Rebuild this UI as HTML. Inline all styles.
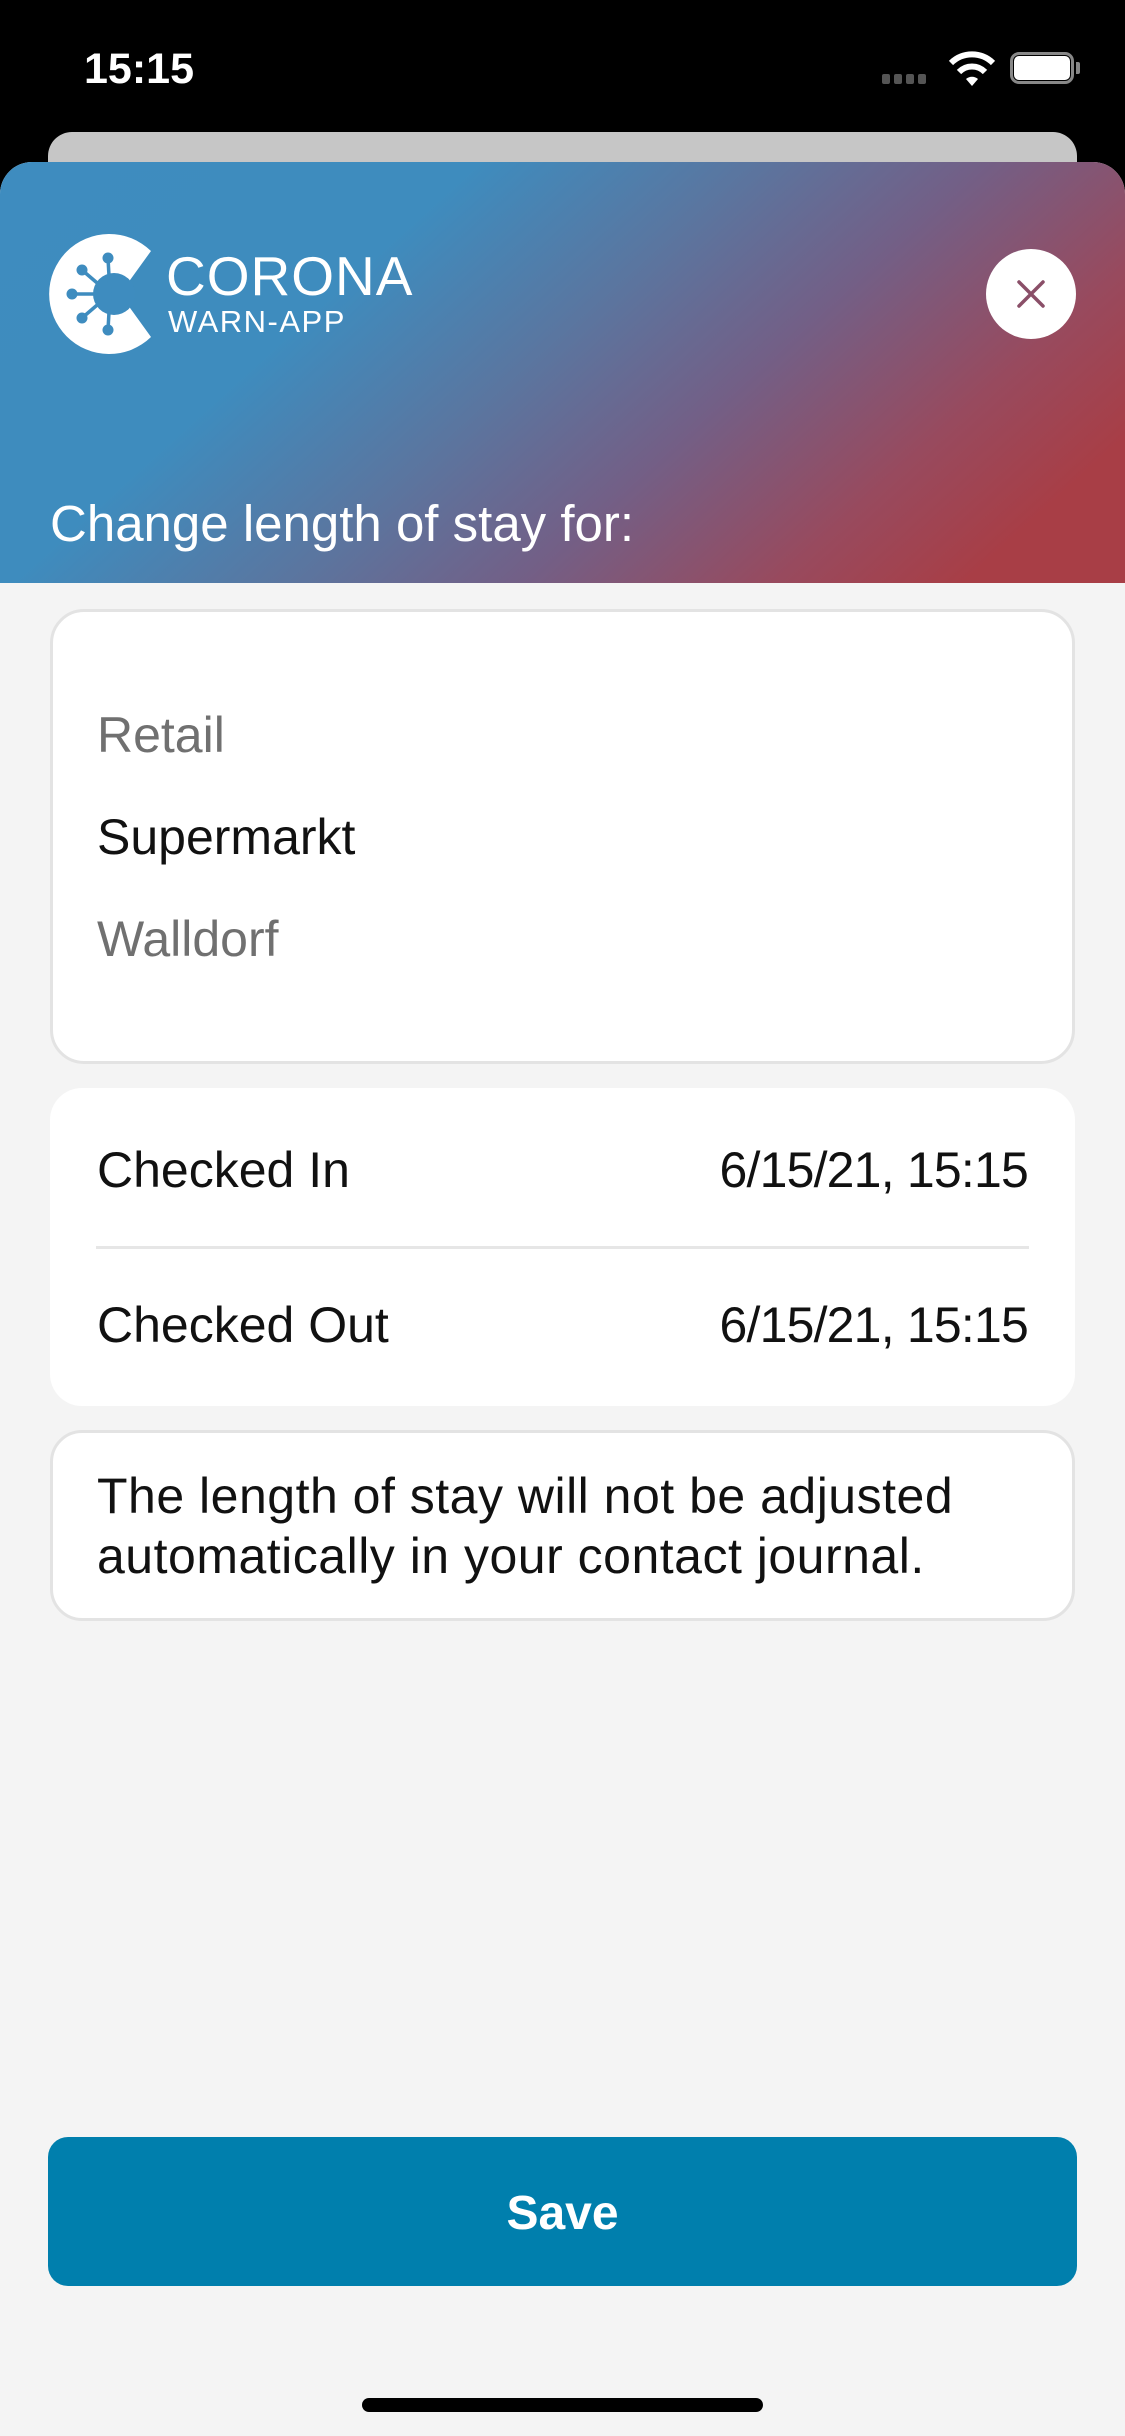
<!DOCTYPE html>
<html><head><meta charset="utf-8"><style>
*{margin:0;padding:0;box-sizing:border-box}
body{width:1125px;height:2436px;background:#000;position:relative;overflow:hidden;font-family:"Liberation Sans",sans-serif}
.abs{position:absolute}
.t{position:absolute;white-space:nowrap;font-size:50px;line-height:1}
</style></head><body>
<div class="t" style="left:84px;top:48px;color:#fff;font-weight:bold;font-size:43px">15:15</div>
<!-- signal dots -->
<div class="abs" style="left:882px;top:74px;width:8px;height:10px;background:#555;border-radius:2px"></div>
<div class="abs" style="left:894px;top:74px;width:8px;height:10px;background:#555;border-radius:2px"></div>
<div class="abs" style="left:906px;top:74px;width:8px;height:10px;background:#555;border-radius:2px"></div>
<div class="abs" style="left:918px;top:74px;width:8px;height:10px;background:#555;border-radius:2px"></div>
<svg class="abs" style="left:948px;top:50px" width="48" height="38" viewBox="0 0 48 38"><path d="M24 36 L18 29 A9 9 0 0 1 30 29 Z" fill="#fff"/><path d="M11 22 A18 18 0 0 1 37 22" stroke="#fff" stroke-width="6" fill="none"/><path d="M3 13 A30 30 0 0 1 45 13" stroke="#fff" stroke-width="6" fill="none"/></svg>
<div class="abs" style="left:1010px;top:52px;width:64px;height:32px;border:3px solid #888;border-radius:9px"></div>
<div class="abs" style="left:1014px;top:56px;width:56px;height:24px;background:#fff;border-radius:5px"></div>
<div class="abs" style="left:1076px;top:62px;width:4px;height:12px;background:#888;border-radius:0 2px 2px 0"></div>
<!-- card behind -->
<div class="abs" style="left:48px;top:132px;width:1029px;height:80px;background:#c6c6c6;border-radius:24px 24px 0 0"></div>
<!-- sheet -->
<div class="abs" style="left:0;top:162px;width:1125px;height:2274px;background:#f4f4f4;border-radius:32px 32px 0 0;overflow:hidden">
 <div class="abs" style="left:0;top:0;width:1125px;height:421px;background:linear-gradient(138deg,#3e8cbf 0%,#3e8cbe 30%,#5a76a0 47%,#735f86 62%,#984a5e 78%,#a83e46 90%)"></div>
</div>
<!-- logo -->
<svg class="abs" style="left:0;top:200px" width="200" height="180" viewBox="0 200 200 180">
 <path d="M151 251 A60 60 0 1 0 151 337 L120 294 Z" fill="#fff"/>
 <circle cx="114" cy="294" r="21" fill="#3e8cbf"/>
 <g stroke="#3e8cbf" stroke-width="3.5">
  <line x1="110" y1="294" x2="72" y2="294"/><line x1="110" y1="294" x2="108" y2="258"/><line x1="110" y1="294" x2="108" y2="330"/>
  <line x1="110" y1="294" x2="82" y2="270"/><line x1="110" y1="294" x2="82" y2="318"/>
 </g>
 <g fill="#3e8cbf"><circle cx="72" cy="294" r="5.5"/><circle cx="108" cy="258" r="5.5"/><circle cx="108" cy="330" r="5.5"/><circle cx="82" cy="270" r="5.5"/><circle cx="82" cy="318" r="5.5"/></g>
</svg>
<div class="t" style="left:166px;top:249px;color:#fff;font-size:55px;letter-spacing:1px">CORONA</div>
<div class="t" style="left:168px;top:306px;color:#fff;font-size:31px;letter-spacing:1.5px">WARN-APP</div>
<!-- close -->
<div class="abs" style="left:986px;top:249px;width:90px;height:90px;border-radius:50%;background:#fff"></div>
<svg class="abs" style="left:986px;top:249px" width="90" height="90"><path d="M33 33 L57 57 M57 33 L33 57" stroke="#8a4f68" stroke-width="3.5" stroke-linecap="round"/></svg>
<div class="t" style="left:50px;top:498px;color:#fff;font-size:51px">Change length of stay for:</div>
<!-- card 1 -->
<div class="abs" style="left:50px;top:609px;width:1025px;height:455px;background:#fff;border:3px solid #e3e3e3;border-radius:34px"></div>
<div class="t" style="left:97px;top:710px;color:#707070">Retail</div>
<div class="t" style="left:97px;top:812px;color:#111">Supermarkt</div>
<div class="t" style="left:97px;top:914px;color:#707070">Walldorf</div>
<!-- card 2 -->
<div class="abs" style="left:50px;top:1088px;width:1025px;height:318px;background:#fff;border-radius:32px"></div>
<div class="t" style="left:97px;top:1145px;color:#111">Checked In</div>
<div class="t" style="right:97px;top:1145px;color:#111;letter-spacing:-0.8px">6/15/21, 15:15</div>
<div class="abs" style="left:96px;top:1246px;width:933px;height:3px;background:#e6e6e6"></div>
<div class="t" style="left:97px;top:1300px;color:#111">Checked Out</div>
<div class="t" style="right:97px;top:1300px;color:#111;letter-spacing:-0.8px">6/15/21, 15:15</div>
<!-- card 3 -->
<div class="abs" style="left:50px;top:1430px;width:1025px;height:191px;background:#fff;border:3px solid #e3e3e3;border-radius:32px"></div>
<div class="t" style="left:97px;top:1471px;color:#111;letter-spacing:0.5px">The length of stay will not be adjusted</div>
<div class="t" style="left:97px;top:1531px;color:#111;letter-spacing:0.5px">automatically in your contact journal.</div>
<!-- button -->
<div class="abs" style="left:48px;top:2137px;width:1029px;height:149px;background:#007fad;border-radius:20px"></div>
<div class="t" style="left:0;width:1125px;text-align:center;top:2190px;color:#fff;font-weight:bold;font-size:48px">Save</div>
<div class="abs" style="left:362px;top:2398px;width:401px;height:14px;background:#000;border-radius:7px"></div>
</body></html>
